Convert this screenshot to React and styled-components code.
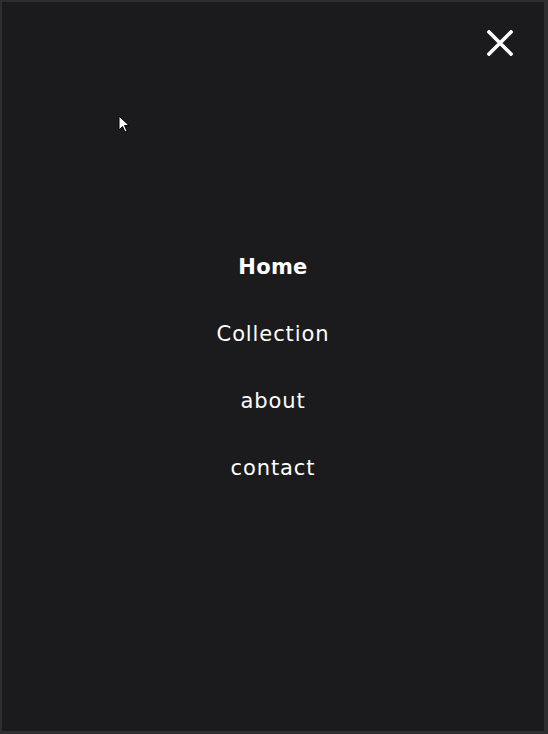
import React from 'react';
import styled, { createGlobalStyle } from 'styled-components';

const GlobalStyle = createGlobalStyle`
  html, body {
    margin: 0;
    padding: 0;
    background: #2c2c2e;
  }
  * { box-sizing: border-box; }
`;

const Overlay = styled.div`
  position: relative;
  width: 548px;
  height: 734px;
  background: #1b1b1d;
  border-style: solid;
  border-color: #2e2e30;
  border-width: 2px 4px 3px 2px;
  display: flex;
  align-items: center;
  justify-content: center;
  font-family: "DejaVu Sans", "Noto Sans", sans-serif;
`;

const CloseButton = styled.button`
  position: absolute;
  top: 28px;
  right: 31px;
  width: 26px;
  height: 26px;
  padding: 0;
  border: 0;
  background: none;
  cursor: pointer;
  display: flex;
`;

const NavList = styled.ul`
  list-style: none;
  margin: 2px 0 0;
  padding: 0;
  display: flex;
  flex-direction: column;
  align-items: center;
  gap: 43px;
`;

const NavItem = styled.li`
  color: #ffffff;
  font-size: 21px;
  line-height: 24px;
  font-weight: ${({ active }) => (active ? 700 : 400)};
  letter-spacing: ${({ active }) => (active ? '0.3px' : '0.9px')};
  cursor: pointer;
`;

const Pointer = styled.svg`
  position: absolute;
  left: 116px;
  top: 113px;
`;

const links = ['Home', 'Collection', 'about', 'contact'];

export default function App() {
  return (
    <>
      <GlobalStyle />
      <Overlay>
        <CloseButton aria-label="close">
          <svg width="26" height="26" viewBox="0 0 26 26">
            <path d="M2 2 L24 24 M24 2 L2 24" stroke="#fff" strokeWidth="3.6" strokeLinecap="square" />
          </svg>
        </CloseButton>
        <NavList>
          {links.map((l, i) => (
            <NavItem key={l} active={i === 0}>{l}</NavItem>
          ))}
        </NavList>
        <Pointer width="14" height="20" viewBox="0 0 14 20">
          <path d="M1 1 L1 15 L4.5 11.5 L7 17 L9 16 L6.5 10.5 L11 10.5 Z" fill="#fff" stroke="#000" strokeWidth="1" />
        </Pointer>
      </Overlay>
    </>
  );
}
